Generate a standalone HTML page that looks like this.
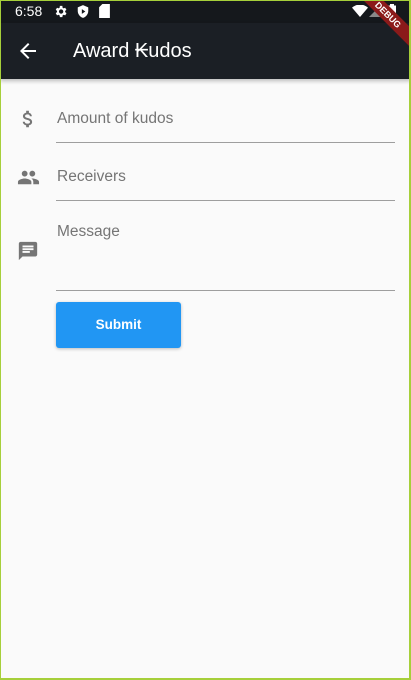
<!DOCTYPE html>
<html><head><meta charset="utf-8"><style>
html,body{margin:0;padding:0;}
body{width:411px;height:680px;position:relative;overflow:hidden;background:#fafafa;font-family:"Liberation Sans",Roboto,sans-serif;}
.frame{position:absolute;inset:0;border:1px solid #a6cf3a;border-right-width:2px;border-bottom-width:2px;pointer-events:none;z-index:10;}
.status{position:absolute;left:0;top:0;width:411px;height:23px;background:#15181c;color:#fff;}
.appbar{position:absolute;left:0;top:23px;width:411px;height:56px;background:#1b1f25;box-shadow:0 2px 4px rgba(0,0,0,.25);}
.title{position:absolute;left:73px;top:17px;font-size:20px;color:#fff;font-weight:500;}
.lbl{position:absolute;left:57px;font-size:15.5px;color:#757575;}
.line{position:absolute;left:56px;width:339px;height:1px;background:#9e9e9e;}
.btn{position:absolute;left:56px;top:302px;width:125px;height:46px;background:#2196f3;border-radius:3px;color:#fff;font-size:13.5px;font-weight:bold;text-align:center;line-height:46px;box-shadow:0 1px 3px rgba(0,0,0,.25);}
.debug{position:absolute;right:-22px;top:8px;width:90px;height:14px;background:#8b1a1a;color:#fff;font-size:9px;font-weight:bold;text-align:center;line-height:14px;transform:rotate(45deg);z-index:5;}
</style></head><body>
<div class="status">
<span style="position:absolute;left:15px;top:3px;font-size:14px;">6:58</span>
<svg style="position:absolute;left:53px;top:4px" width="15" height="15" viewBox="0 0 24 24"><path fill="#fff" d="M19.4 13a7 7 0 000-2l2.1-1.6-2-3.5-2.5 1a7 7 0 00-1.7-1L15 3h-4l-.4 2.9a7 7 0 00-1.7 1l-2.5-1-2 3.5L6.5 11a7 7 0 000 2l-2.1 1.6 2 3.5 2.5-1a7 7 0 001.7 1L11 21h4l.4-2.9a7 7 0 001.7-1l2.5 1 2-3.5zM13 15.5a3.5 3.5 0 110-7 3.5 3.5 0 010 7z"/></svg>
<svg style="position:absolute;left:76px;top:4px" width="14" height="15" viewBox="0 0 24 24"><path fill="#fff" d="M12 1L3 5v6c0 5.5 3.8 10.7 9 12 5.2-1.3 9-6.5 9-12V5z"/><path fill="#15181c" d="M10 8v8l6-4z"/></svg>
<svg style="position:absolute;left:99px;top:4px" width="11" height="14" viewBox="0 0 10 13"><path fill="#fff" d="M3 0h7v13H0V3z"/></svg>
<svg style="position:absolute;left:352px;top:5px" width="16" height="12" viewBox="0 0 24 18"><path fill="#fff" d="M12 18L0 4a18 18 0 0124 0z"/></svg>
<svg style="position:absolute;left:369px;top:5px" width="12" height="12" viewBox="0 0 12 12"><path fill="#888" d="M12 0v12H0z"/></svg>
<svg style="position:absolute;left:388px;top:4px" width="8" height="14" viewBox="0 0 8 14"><path fill="#fff" d="M2 0h4v1.5h2V14H0V1.5h2z"/></svg>
</div>
<div class="debug">DEBUG</div>
<div class="appbar">
<svg style="position:absolute;left:16px;top:16px" width="24" height="24" viewBox="0 0 24 24"><path fill="#fff" d="M20 11H7.8l5.6-5.6L12 4l-8 8 8 8 1.4-1.4L7.8 13H20z"/></svg>
<div class="title">Award ₭udos</div>
</div>
<svg style="position:absolute;left:17px;top:108px" width="22" height="22" viewBox="0 0 24 24"><path fill="#757575" d="M11.8 10.9c-2.3-.6-3-1.2-3-2.1 0-1.1 1-1.9 2.7-1.9 1.8 0 2.4.8 2.5 2.1h2.2c-.1-1.7-1.1-3.3-3.2-3.8V3h-3v2.2c-1.9.4-3.5 1.7-3.5 3.6 0 2.3 1.9 3.5 4.7 4.1 2.5.6 3 1.5 3 2.4 0 .7-.5 1.8-2.7 1.8-2.1 0-2.9-.9-3-2.1H6.3c.1 2.2 1.8 3.5 3.7 3.9V21h3v-2.1c1.9-.4 3.5-1.5 3.5-3.6 0-2.8-2.4-3.8-4.7-4.4z"/></svg>
<div class="lbl" style="top:110px">Amount of kudos</div>
<div class="line" style="top:142px"></div>
<svg style="position:absolute;left:17px;top:166px" width="23" height="23" viewBox="0 0 24 24"><path fill="#757575" d="M16 11c1.7 0 3-1.3 3-3s-1.3-3-3-3-3 1.3-3 3 1.3 3 3 3zm-8 0c1.7 0 3-1.3 3-3S9.7 5 8 5 5 6.3 5 8s1.3 3 3 3zm0 2c-2.3 0-7 1.2-7 3.5V19h14v-2.5C15 14.2 10.3 13 8 13zm8 0c-.3 0-.6 0-1 .1 1.2.8 2 1.9 2 3.4V19h6v-2.5c0-2.3-4.7-3.5-7-3.5z"/></svg>
<div class="lbl" style="top:168px">Receivers</div>
<div class="line" style="top:200px"></div>
<svg style="position:absolute;left:17px;top:240px" width="22" height="22" viewBox="0 0 24 24"><path fill="#757575" d="M20 2H4c-1.1 0-2 .9-2 2v18l4-4h14c1.1 0 2-.9 2-2V4c0-1.1-.9-2-2-2zM6 9h12v2H6zm8 5H6v-2h8zm4-6H6V6h12z"/></svg>
<div class="lbl" style="top:223px">Message</div>
<div class="line" style="top:290px"></div>
<div class="btn">Submit</div>
<div class="frame"></div>
</body></html>
